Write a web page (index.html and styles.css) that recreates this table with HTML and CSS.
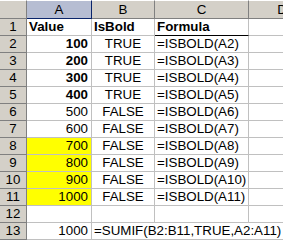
FILE: index.html
```html
<!DOCTYPE html>
<html>
<head>
<meta charset="utf-8">
<link rel="stylesheet" href="styles.css">
</head>
<body>
<div class="sheet">
  <div class="corner"></div>
  <div class="colhead sel">A</div>
  <div class="colhead">B</div>
  <div class="colhead">C</div>
  <div class="colhead">D</div>

  <div class="rowhead">1</div>
  <div class="cell b">Value</div>
  <div class="cell b">IsBold</div>
  <div class="cell b under">Formula</div>
  <div class="cell"></div>

  <div class="rowhead">2</div>
  <div class="cell r b">100</div>
  <div class="cell c">TRUE</div>
  <div class="cell">=ISBOLD(A2)</div>
  <div class="cell"></div>

  <div class="rowhead">3</div>
  <div class="cell r b">200</div>
  <div class="cell c">TRUE</div>
  <div class="cell">=ISBOLD(A3)</div>
  <div class="cell"></div>

  <div class="rowhead">4</div>
  <div class="cell r b">300</div>
  <div class="cell c">TRUE</div>
  <div class="cell">=ISBOLD(A4)</div>
  <div class="cell"></div>

  <div class="rowhead">5</div>
  <div class="cell r b">400</div>
  <div class="cell c">TRUE</div>
  <div class="cell">=ISBOLD(A5)</div>
  <div class="cell"></div>

  <div class="rowhead">6</div>
  <div class="cell r">500</div>
  <div class="cell c">FALSE</div>
  <div class="cell">=ISBOLD(A6)</div>
  <div class="cell"></div>

  <div class="rowhead">7</div>
  <div class="cell r">600</div>
  <div class="cell c">FALSE</div>
  <div class="cell">=ISBOLD(A7)</div>
  <div class="cell"></div>

  <div class="rowhead">8</div>
  <div class="cell r y">700</div>
  <div class="cell c">FALSE</div>
  <div class="cell">=ISBOLD(A8)</div>
  <div class="cell"></div>

  <div class="rowhead">9</div>
  <div class="cell r y">800</div>
  <div class="cell c">FALSE</div>
  <div class="cell">=ISBOLD(A9)</div>
  <div class="cell"></div>

  <div class="rowhead">10</div>
  <div class="cell r y">900</div>
  <div class="cell c">FALSE</div>
  <div class="cell">=ISBOLD(A10)</div>
  <div class="cell"></div>

  <div class="rowhead">11</div>
  <div class="cell r y">1000</div>
  <div class="cell c">FALSE</div>
  <div class="cell">=ISBOLD(A11)</div>
  <div class="cell"></div>

  <div class="rowhead">12</div>
  <div class="cell"></div>
  <div class="cell"></div>
  <div class="cell"></div>
  <div class="cell"></div>

  <div class="rowhead">13</div>
  <div class="cell r">1000</div>
  <div class="cell span3">=SUMIF(B2:B11,TRUE,A2:A11)</div>
</div>
</body>
</html>
```
FILE: styles.css
```css
html, body {
  margin: 0;
  padding: 0;
  background: #ffffff;
  overflow: hidden;
}
.sheet {
  display: grid;
  grid-template-columns: 27px 65px 63px 94px 67px;
  grid-template-rows: 19px;
  grid-auto-rows: 17px;
  font-family: "Liberation Sans", Arial, sans-serif;
  font-size: 13.33px;
  color: #000000;
  width: 316px;
}
.sheet > div {
  box-sizing: border-box;
  line-height: 16px;
  white-space: nowrap;
  overflow: hidden;
}
.corner {
  background: #d4d0c8;
  border-top: 1px solid #ffffff;
  border-right: 1px solid #808080;
  border-bottom: 1px solid #808080;
}
.colhead {
  background: #d4d0c8;
  border-top: 1px solid #ffffff;
  border-right: 1px solid #808080;
  border-bottom: 1px solid #808080;
  text-align: center;
  line-height: 17px !important;
}
.colhead.sel {
  background: #b6bdd2;
  border-right-color: #0a246a;
  border-bottom-color: #0a246a;
}
.rowhead {
  background: #d4d0c8;
  border-right: 1px solid #808080;
  border-bottom: 1px solid #808080;
  text-align: center;
}
.cell {
  border-right: 1px solid #c0c0c0;
  border-bottom: 1px solid #c0c0c0;
  padding: 0 2px;
}
.cell.b { font-weight: bold; }
.cell.r { text-align: right; padding-right: 3px; }
.cell.c { text-align: center; }
.cell.y { background: #ffff00; }
.cell.under { border-bottom: 1px solid #000000; }
.cell.span3 { grid-column: span 3; overflow: visible; }
```
